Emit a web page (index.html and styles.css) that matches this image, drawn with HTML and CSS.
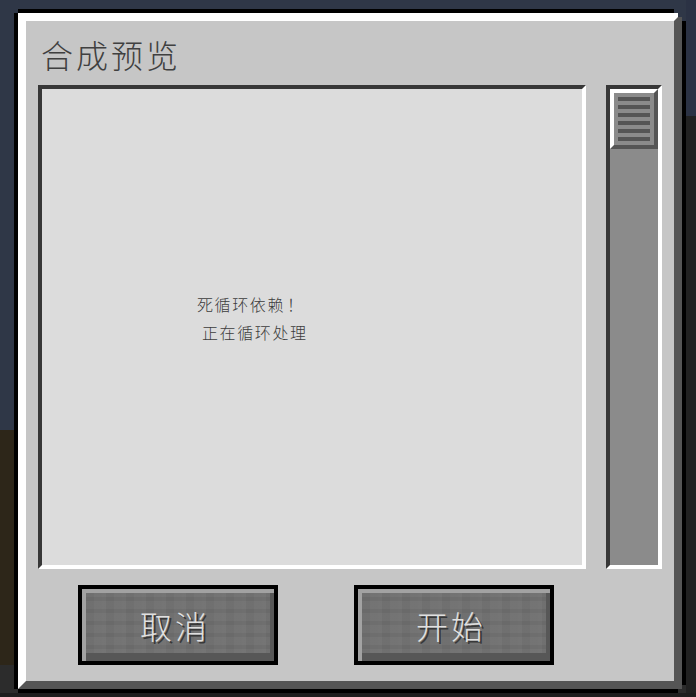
FILE: index.html
```html
<!DOCTYPE html>
<html lang="zh-CN">
<head>
    <meta charset="UTF-8">
    <meta name="viewport" content="width=device-width, initial-scale=1.0">
    <title>合成预览</title>
    <link rel="stylesheet" href="styles.css">
</head>
<body>

<div class="window">
    <div class="frame">
        <h1 class="title">合成预览</h1>
        <div class="content">
            <div class="list">
                <p class="msg">死循环依赖<span class="bang">！</span></p>
                <p class="msg msg-indent">正在循环处理</p>
            </div>
            <div class="scroll">
                <div class="thumb">
                    <span></span><span></span><span></span>
                    <span></span><span></span><span></span>
                </div>
            </div>
        </div>
        <div class="actions">
            <button class="btn">取消</button>
            <button class="btn">开始</button>
        </div>
    </div>
</div>

</body>
</html>
```

FILE: styles.css
```css
/* ventana estilo bloque */
html, body { height: 100%; }
body {
    margin: 0; padding: 9px 0 0 14px; box-sizing: border-box; overflow: hidden;
    font-family: "Noto Sans CJK SC", "Noto Sans", sans-serif;
    background:
        linear-gradient(#1e1e1e, #1e1e1e) left bottom / 100% 4px no-repeat,
        linear-gradient(#2b3244 0 116px, #212121 116px) right top / 10px 100% no-repeat,
        linear-gradient(#2f3747 0 430px, #2d2619 430px 665px, #2c2c2c 665px);
}
.window {
    width: 672px; height: 684px; box-sizing: border-box; padding: 4px; background: #000;
    clip-path: polygon(4px 0, calc(100% - 12px) 0, calc(100% - 12px) 4px, calc(100% - 8px) 4px, calc(100% - 8px) 8px,
        calc(100% - 4px) 8px, calc(100% - 4px) 12px, 100% 12px, 100% calc(100% - 8px), calc(100% - 4px) calc(100% - 8px),
        calc(100% - 4px) calc(100% - 4px), calc(100% - 8px) calc(100% - 4px), calc(100% - 8px) 100%, 4px 100%,
        4px calc(100% - 4px), 0 calc(100% - 4px), 0 4px, 4px 4px);
}
.frame {
    height: 100%; box-sizing: border-box; background: #c6c6c6;
    border: 8px solid; border-color: #fff #555 #555 #fff;
    padding: 0 12px 16px 12px;
}
.title {
    margin: 0; height: 64px; box-sizing: border-box; padding: 17px 0 0 3px;
    font-size: 32px; line-height: 32px; font-weight: 300; letter-spacing: 3px; color: #404040;
}
.content { display: flex; gap: 20px; height: 484px; }
.list {
    width: 548px; box-sizing: border-box; background: #dcdcdc;
    border: 4px solid; border-color: #373737 #fff #fff #373737;
    padding: 201px 0 0 155px;
}
.msg { margin: 0; font-size: 16px; line-height: 28px; letter-spacing: 1.6px; font-weight: 300; color: #3c3c3c; }
.msg-indent { margin-left: 5px; }
.bang { font-family: "Noto Sans CJK JP", sans-serif; margin-left: 2px; }
.scroll {
    width: 56px; box-sizing: border-box; background: #8b8b8b;
    border: 4px solid; border-color: #373737 #fff #fff #373737;
}
.thumb {
    width: 48px; height: 60px; box-sizing: border-box; background: #8b8b8b;
    border: 4px solid; border-color: #fff #555 #555 #fff;
    padding: 4px 4px 0; display: flex; flex-direction: column; gap: 4px;
}
.thumb span { display: block; height: 4px; background: #555; }
.actions { display: flex; gap: 76px; margin-top: 16px; padding-left: 40px; }
.btn {
    width: 200px; height: 80px; padding: 0 6px 0 0; margin: 0;
    border: 4px solid #000;
    background:
        repeating-linear-gradient(90deg, rgba(255,255,255,0.025) 0 4px, rgba(0,0,0,0.02) 4px 12px, rgba(255,255,255,0.015) 12px 20px),
        repeating-linear-gradient(0deg, rgba(0,0,0,0.03) 0 4px, rgba(255,255,255,0.02) 4px 12px),
        #6f6f6f;
    box-shadow: inset 4px 4px 0 #a2a2a2, inset -4px -8px 0 #575757;
    font-family: "Noto Sans CJK SC", "Noto Sans", sans-serif;
    font-size: 32px; line-height: 32px; font-weight: 300; letter-spacing: 3px;
    color: #e0e0e0; text-shadow: 2px 2px 0 #383838; cursor: pointer;
}
```
